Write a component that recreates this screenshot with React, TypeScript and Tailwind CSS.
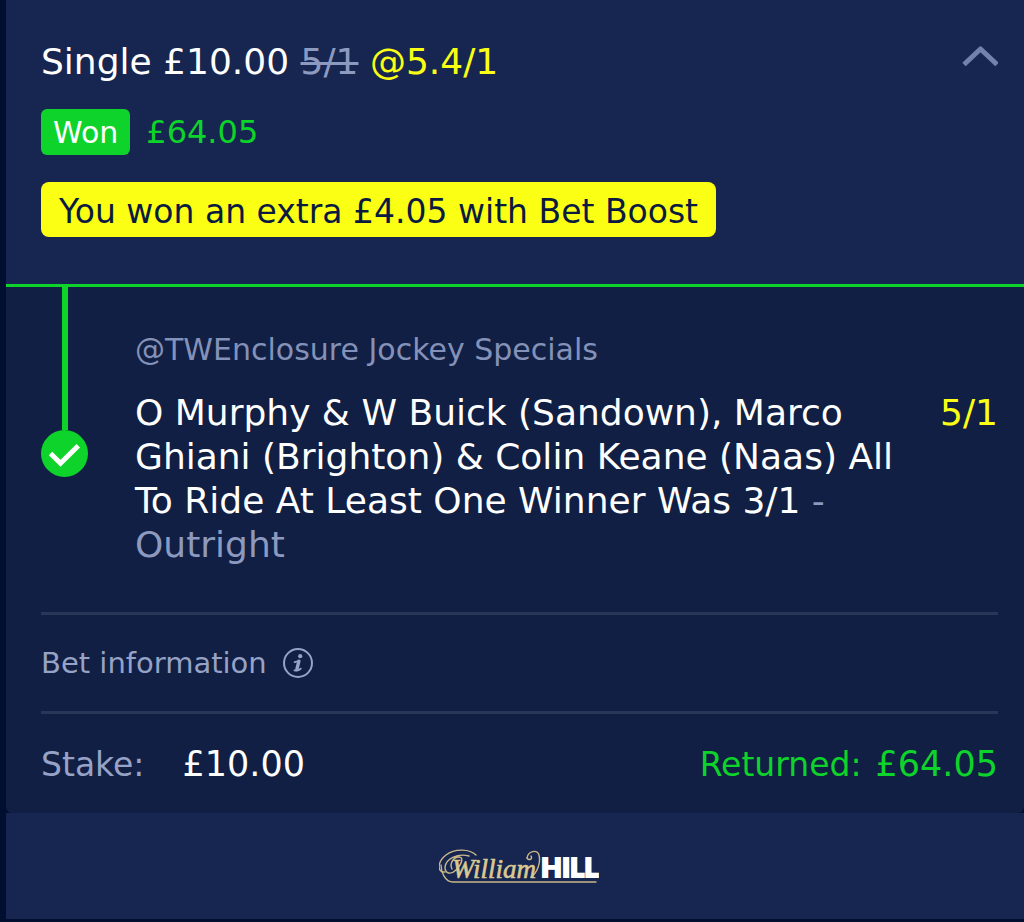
import { useState } from "react"

type Leg = {
  event: string
  selection: string
  market: string
  odds: string
}

const leg: Leg = {
  event: "@TWEnclosure Jockey Specials",
  selection:
    "O Murphy & W Buick (Sandown), Marco Ghiani (Brighton) & Colin Keane (Naas) All To Ride At Least One Winner Was 3/1",
  market: "Outright",
  odds: "5/1",
}

function Chevron({ open }: { open: boolean }) {
  return (
    <svg
      viewBox="0 0 36 22"
      className={open ? "h-[22px] w-9" : "h-[22px] w-9 rotate-180"}
      fill="none"
      stroke="#7382ac"
      strokeWidth="5"
      strokeLinejoin="round"
      aria-hidden="true"
    >
      <path d="M2 19.5 18.5 4 35 19.5" />
    </svg>
  )
}

function WonTick() {
  return (
    <svg viewBox="0 0 47 47" className="size-[47px]" fill="none" aria-hidden="true">
      <circle cx="23.5" cy="23.5" r="23.5" fill="#0dd32b" />
      <path
        d="M11.3 25.3l8.2 7.9L35.5 17.5"
        stroke="#fff"
        strokeWidth="5"
        strokeLinecap="square"
      />
    </svg>
  )
}

function InfoIcon() {
  return (
    <svg viewBox="0 0 30 30" className="size-[30px]" fill="none" aria-hidden="true">
      <circle cx="15" cy="15" r="14" stroke="#96a2c6" strokeWidth="2" />
      <circle cx="17.2" cy="8.2" r="2.1" fill="#96a2c6" />
      <path d="M15.9 13.2 13.8 21.6" stroke="#96a2c6" strokeWidth="3.4" strokeLinecap="round" />
      <path
        d="M11.6 14.2l4.2-1.2M11.4 22.4c2.6.6 4.6.2 6.4-1.8"
        stroke="#96a2c6"
        strokeWidth="1.8"
        strokeLinecap="round"
      />
    </svg>
  )
}

function Logo() {
  return (
    <svg viewBox="0 0 160 38" className="h-[38px] w-40" fill="none" role="img" aria-label="William Hill">
      {/* swashes around the W and the last m */}
      <g stroke="#c9b88a" strokeWidth="1.4" strokeLinecap="round">
        <path d="M37 8C31 2 16 1 7 8c-9 7-9 18-1 17" />
        <path d="M30 9C18 6 7 12 6 20c0 7 6 8 11 3 6-6 8-13 3-13-5 0-10 6-7 12" />
        <path d="M2 18c0 7 4 17 12 17h143" />
        <path d="M88 11c1-7 10-9 12-3 2 8-2 18-8 22" />
        <path d="M88 11c2 3 6 1 4-2" />
      </g>
      <text
        x="13"
        y="31"
        fill="#dcc891"
        stroke="#dcc891"
        strokeWidth="0.6"
        fontFamily="Liberation Serif, serif"
        fontStyle="italic"
        fontSize="27"
      >
        William
      </text>
      <text
        x="102"
        y="30"
        fill="#fff"
        stroke="#fff"
        strokeWidth="2"
        fontFamily="Lato, sans-serif"
        fontWeight="900"
        fontSize="27"
      >
        HILL
      </text>
    </svg>
  )
}

export default function App() {
  const [open, setOpen] = useState(true)

  return (
    <div className="min-h-screen bg-[#000e30] pb-[3px] pl-[6px] font-['DejaVu_Sans',Verdana,sans-serif] text-[35px] leading-[44px] text-white">
      <article>
        {/* Bet summary */}
        <header className="flex items-start justify-between border-b-3 border-[#0dd32b] bg-[#162650] pt-10 pr-[26px] pb-[47px] pl-[35px]">
          <div>
            <h1 className="text-[36px]">
              Single £10.00 <s className="text-[#8d9ac0] decoration-3">5/1</s>{" "}
              <span className="text-[#fbff14]">@5.4/1</span>
            </h1>
            <div className="mt-[25px] flex items-center gap-4 text-[32px] text-[#0dd32b]">
              <span className="rounded-md bg-[#0dd32b] px-3 pt-0.5 text-[30px] text-white">Won</span>
              <span>£64.05</span>
            </div>
            <p className="mt-[27px] w-fit rounded-lg bg-[#fbff14] px-[18px] pt-2 pb-[3px] text-[33px] text-[#0a1a40]">
              You won an extra £4.05 with Bet Boost
            </p>
          </div>
          <button
            type="button"
            aria-label="Toggle bet details"
            aria-expanded={open}
            onClick={() => setOpen(!open)}
            className="mt-[5px]"
          >
            <Chevron open={open} />
          </button>
        </header>

        {open && (
          <div className="rounded-b-md bg-[#101f43] pr-[26px] pl-[35px]">
            {/* Selection */}
            <section className="flex gap-[47px] pb-[45px]">
              <div className="flex shrink-0 flex-col items-center">
                <div className="h-[143px] w-[6px] bg-[#0dd32b]" />
                <WonTick />
              </div>
              <div className="flex-1 pt-[43px]">
                <p className="text-[30px] leading-10 text-[#8491b8]">{leg.event}</p>
                <div className="mt-[21px] flex items-start justify-between gap-9 text-[36px]">
                  <h2>
                    {leg.selection} <span className="text-[#8d9ac0]">- {leg.market}</span>
                  </h2>
                  <span className="text-[#fbff14]">{leg.odds}</span>
                </div>
              </div>
            </section>

            <div className="border-y-3 border-[#283658] py-[26px]">
              <button type="button" className="flex items-center gap-4 text-[29px] text-[#96a2c6]">
                Bet information
                <InfoIcon />
              </button>
            </div>

            <dl className="flex items-baseline justify-between pt-7 pb-[26px]">
              <div className="flex items-baseline gap-[38px]">
                <dt className="text-[33px] text-[#96a2c6]">Stake:</dt>
                <dd>£10.00</dd>
              </div>
              <div className="flex items-baseline gap-[14px] text-[#0dd32b]">
                <dt className="text-[33px]">Returned:</dt>
                <dd>£64.05</dd>
              </div>
            </dl>
          </div>
        )}

        <footer className="flex justify-center bg-[#162650] py-[34px] pl-2">
          <Logo />
        </footer>
      </article>
    </div>
  )
}
